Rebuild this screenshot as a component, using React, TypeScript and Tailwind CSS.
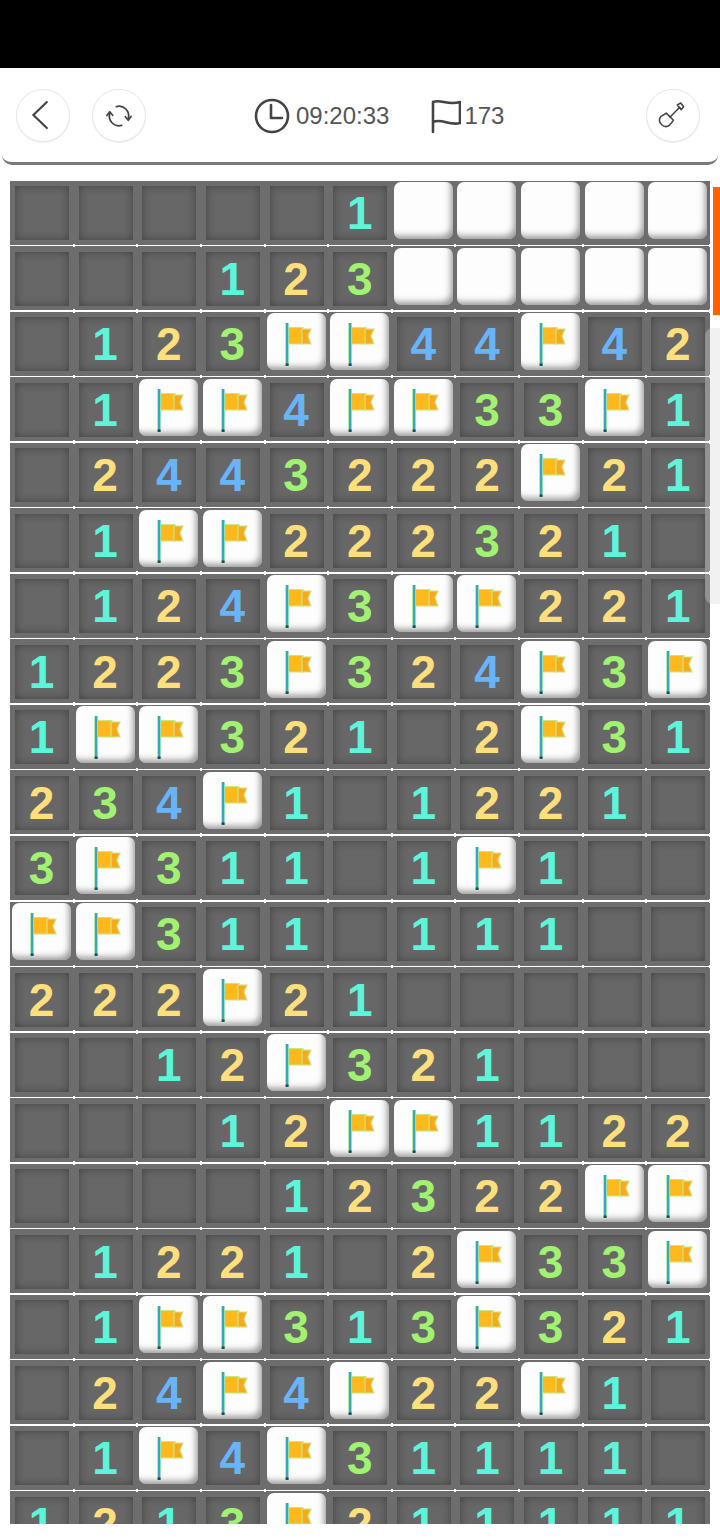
const BOARD = [
  '.....1WWWWW',
  '...123WWWWW',
  '.123FF44F42',
  '.1FF4FF33F1',
  '.2443222F21',
  '.1FF222321.',
  '.124F3FF221',
  '1223F324F3F',
  '1FF321.2F31',
  '234F1.1221.',
  '3F311.1F1..',
  'FF311.111..',
  '222F21.....',
  '..12F321...',
  '...12FF1122',
  '....12322FF',
  '.1221.2F33F',
  '.1FF313F321',
  '.24F4F22F1.',
  '.1F4F31111.',
  '1213F211111',
]

const NUMBER_COLORS: Record<string, string> = {
  '1': 'text-[#5cf5d9]',
  '2': 'text-[#ffdf7c]',
  '3': 'text-[#a2f272]',
  '4': 'text-[#68b4fb]',
}

function FlagMark() {
  return (
    <svg viewBox="0 0 59 57" className="h-[57px] w-[59px]">
      <path d="M21 14.500h15v16.500H21z" fill="#fdb91e" stroke="#cde67e" strokeWidth="1.2" />
      <path d="M35 16h9l-3 7 3 8H35z" fill="#f8aa1c" stroke="#cde67e" strokeWidth="1.2" />
      <rect x="18" y="10" width="4" height="42.500" fill="#b2ecbc" />
      <rect x="19" y="10" width="2.200" height="42.500" fill="#3ba6b4" />
      <rect x="18.600" y="50.500" width="3" height="2.400" fill="#17474f" />
    </svg>
  )
}

function Cell({ value }: { value: string }) {
  const isTile = value === 'W' || value === 'F'

  return (
    <div className="relative h-full bg-[#6d6d6d]">
      {isTile ? (
        <div className="ml-[2px] mt-[1px] flex h-[57px] w-[59px] items-center justify-center rounded-[7px] bg-[#fdfdfd] shadow-[inset_-4px_-5px_6px_-2px_rgba(70,70,70,0.55)]">
          {value === 'F' && <FlagMark />}
        </div>
      ) : (
        <div className="ml-[5px] mt-[5px] flex h-[54px] w-[54px] items-center justify-center bg-[#676767] shadow-[inset_0_0_8px_rgba(30,30,30,0.5)]">
          {value !== '.' && (
            <span className={`-ml-[1px] font-['Liberation_Sans',sans-serif] text-[46px] font-bold leading-none ${NUMBER_COLORS[value]}`}>
              {value}
            </span>
          )}
        </div>
      )}
      <div className="absolute bottom-[0.5px] left-0 h-[1.5px] w-full bg-white" />
      <div className="absolute bottom-[-0.5px] right-[-1px] z-10 h-[3.5px] w-[2px] bg-white" />
    </div>
  )
}

function CircleButton({ children, className }: { children: React.ReactNode; className: string }) {
  return (
    <button className={`flex h-[53px] w-[54px] items-center justify-center rounded-full border border-[#e6e6e6] bg-white shadow-[0_1px_1px_rgba(0,0,0,0.06)] ${className}`}>
      {children}
    </button>
  )
}

export default function App() {
  return (
    <div className="relative h-[1540px] w-[720px] overflow-hidden bg-white font-['Liberation_Sans',sans-serif]">
      <div className="h-[68px] bg-black" />

      <header className="mx-[2px] flex h-[97px] items-start rounded-b-[10px] border-b-[3px] border-[#797979] bg-white pt-[21px]">
        <CircleButton className="ml-[14px]">
          <svg viewBox="0 0 54 53" className="h-[53px] w-[54px]" fill="none" stroke="#444" strokeWidth="2.2" strokeLinecap="round">
            <path d="M31 12.500 17 26l14 13.500" />
          </svg>
        </CircleButton>
        <CircleButton className="ml-[22px]">
          <svg viewBox="0 0 32 32" className="h-7 w-7" fill="none" stroke="#444" strokeWidth="2" strokeLinecap="round" strokeLinejoin="round">
            <path d="M13 5.200a11 11 0 0 1 13.600 13.600" />
            <path d="M23.300 16.800l3.200 4 3.300-4.200" />
            <path d="M19 26.800A11 11 0 0 1 5.400 13.200" />
            <path d="M2.200 15.400l3.200-4.200 3.400 4" />
          </svg>
        </CircleButton>

        <div className="ml-[108px] flex h-[53px] items-center text-[24px] leading-none text-[#555]">
          <svg viewBox="0 0 36 36" className="mr-[6px] h-9 w-9" fill="none" stroke="#444" strokeWidth="2.600" strokeLinecap="round" strokeLinejoin="round">
            <circle cx="18" cy="18" r="16" />
            <path d="M17 7v13h11" />
          </svg>
          <span>09:20:33</span>
        </div>

        <div className="ml-[42px] flex h-[53px] items-center text-[24px] leading-none text-[#555]">
          <svg viewBox="0 0 30 34" className="mr-[3px] h-[34px] w-[30px]" fill="none" stroke="#444" strokeWidth="2.600" strokeLinecap="round" strokeLinejoin="round">
            <path d="M2 33V3c8-3.500 14 4 27 0v21c-11 3-18-5-27-1" />
          </svg>
          <span>173</span>
        </div>

        <CircleButton className="ml-auto mr-[18px]">
          <svg viewBox="0 0 54 53" className="h-[53px] w-[54px]" fill="none" stroke="#444" strokeWidth="1.600" strokeLinecap="round" strokeLinejoin="round">
            <path d="M20 24l7.500 7.500-4 5a6.500 6.500 0 0 1-9.500-8.500z" />
            <path d="M24 28l10-10" />
            <path d="M31.500 15.500l3.500-2 3 4-2.500 3z" />
          </svg>
        </CircleButton>
      </header>

      <main className="ml-[10px] mt-[16px] h-[1343px] w-[700px] overflow-hidden">
        <div className="grid grid-cols-[repeat(11,minmax(0,1fr))] auto-rows-[65.55px]">
          {BOARD.flatMap((row, r) =>
            row.split('').map((value, c) => <Cell key={`${r}-${c}`} value={value} />),
          )}
        </div>
      </main>

      <div className="absolute right-0 top-[187px] h-[128px] w-[7px] bg-[#ff6200]" />
      <div className="absolute right-0 top-[328px] h-[276px] w-[15px] rounded-l-[8px] bg-[#d8d8d8]/35" />
    </div>
  )
}
